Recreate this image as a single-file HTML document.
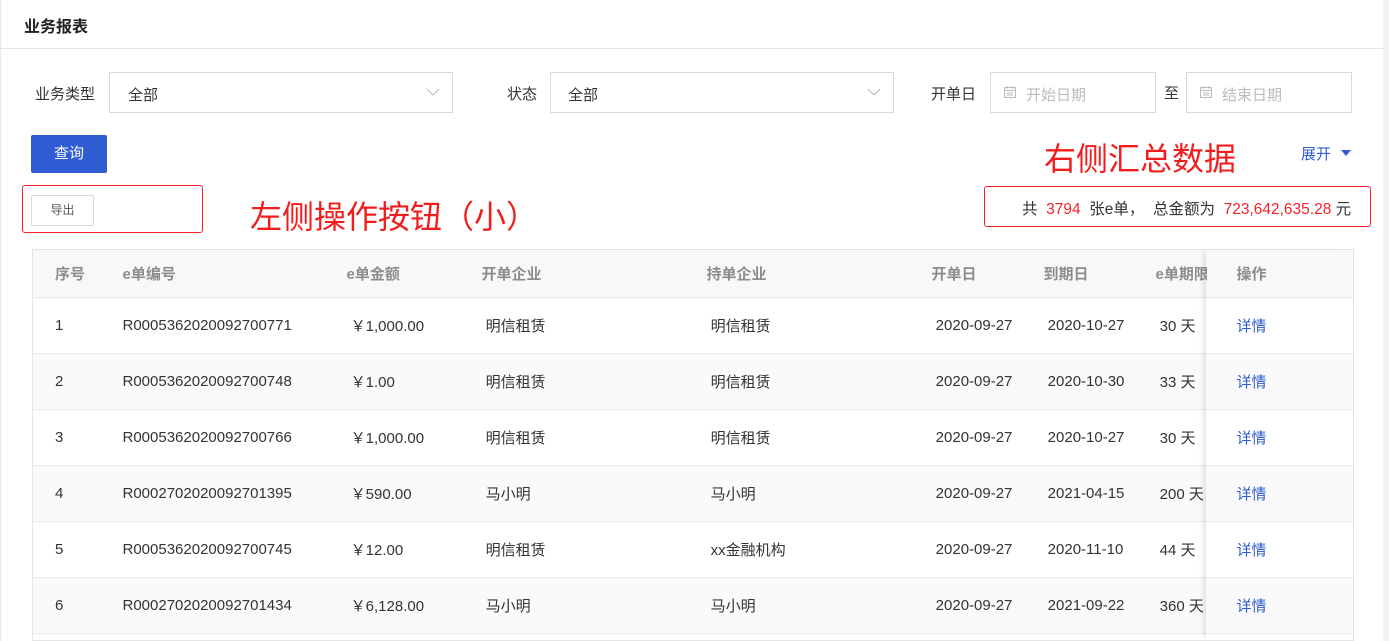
<!DOCTYPE html>
<html><head><meta charset="utf-8"><style>
*{margin:0;padding:0;box-sizing:border-box}
html,body{width:1389px;height:641px;overflow:hidden}
body{background:#f0f2f5;font-family:"Liberation Sans","Noto Sans CJK SC",sans-serif;font-size:15px;color:#333;position:relative}
.card{position:absolute;left:0;top:0;width:1383px;height:641px;background:#fff;border-left:1px solid #e8e8e8;overflow:hidden}
.a{position:absolute;white-space:nowrap}
.title{left:23px;top:13px;font-size:16px;font-weight:bold;color:#222}
.hr{left:0;top:48px;width:1383px;height:1px;background:#e4e4e4}
.box{position:absolute;border:1px solid #d9d9d9;background:#fff;height:41px}
.red{position:absolute;border:1px solid #f5222d;border-radius:3px}
table{position:absolute;left:31px;top:249px;width:1322px;border-collapse:collapse;border:1px solid #e4e4e4;table-layout:fixed}
td,th{height:56px;text-align:left;font-weight:normal;padding:0;border-bottom:1px solid #e8e8e8;white-space:nowrap;overflow:hidden}
th{height:48px;background:#f8f8f8;color:#8c8c8c;font-weight:bold;font-size:15px}
tr:nth-child(odd) td{background:#fafafa}
tr.last td{height:7px;border-bottom:0}
.fix{position:absolute;left:1205px;top:250px;width:147px;height:391px;box-shadow:-5px 0 6px -3px rgba(0,0,0,.12)}
</style></head><body>
<div class="card">
<div class="a title">业务报表</div>
<div class="a hr"></div>
<div class="a" style="left:34px;top:83px;color:#333">业务类型</div>
<div class="box" style="left:108px;top:72px;width:344px"><span class="a" style="left:18px;top:11px">全部</span><svg class="a" style="left:316px;top:14px" width="14" height="10"><path d="M1 2l6 6 6-6" fill="none" stroke="#bbb"/></svg></div>
<div class="a" style="left:506px;top:83px">状态</div>
<div class="box" style="left:549px;top:72px;width:344px"><span class="a" style="left:17px;top:11px">全部</span><svg class="a" style="left:316px;top:14px" width="14" height="10"><path d="M1 2l6 6 6-6" fill="none" stroke="#bbb"/></svg></div>
<div class="a" style="left:930px;top:83px">开单日</div>
<div class="box" style="left:989px;top:72px;width:166px;color:#bbb"><svg class="a" style="left:12px;top:12px" width="14" height="14"><rect x="1.5" y="2.5" width="11" height="10" fill="none" stroke="#bbb"/><path d="M1.5 5.5h11M4 1v3M10 1v3M4 8h6M4 10h6" stroke="#bbb"/></svg><span class="a" style="left:35px;top:11px">开始日期</span></div>
<div class="a" style="left:1163px;top:82px">至</div>
<div class="box" style="left:1185px;top:72px;width:166px;color:#bbb"><svg class="a" style="left:12px;top:12px" width="14" height="14"><rect x="1.5" y="2.5" width="11" height="10" fill="none" stroke="#bbb"/><path d="M1.5 5.5h11M4 1v3M10 1v3M4 8h6M4 10h6" stroke="#bbb"/></svg><span class="a" style="left:35px;top:11px">结束日期</span></div>
<div class="a" style="left:30px;top:135px;width:76px;height:38px;background:#2f5bd3;border-radius:2px;color:#fff;font-size:15px;text-align:center;line-height:38px">查询</div>
<div class="a" style="left:1043px;top:134px;font-size:32px;color:#f21d1d">右侧汇总数据</div>
<div class="a" style="left:1300px;top:143px;color:#2f5bd3">展开</div>
<svg class="a" style="left:1339px;top:149px" width="12" height="8"><path d="M1 1h10l-5 6z" fill="#2f5bd3"/></svg>
<div class="red" style="left:21px;top:185px;width:181px;height:48px"></div>
<div class="a" style="left:30px;top:195px;width:63px;height:31px;border:1px solid #d9d9d9;border-radius:2px;font-size:12px;text-align:center;line-height:29px;color:#555">导出</div>
<div class="a" style="left:249px;top:192px;font-size:32px;color:#f21d1d">左侧操作按钮（小）</div>
<div class="red" style="left:983px;top:186px;width:387px;height:41px"></div>
<div class="a" style="left:1021px;top:197px;color:#333;font-size:15.5px">共&nbsp;&nbsp;<span style="color:#f5222d">3794</span>&nbsp;&nbsp;张e单，&nbsp;&nbsp;总金额为&nbsp;&nbsp;<span style="color:#f5222d">723,642,635.28</span>&nbsp;元</div>
<table>
<colgroup><col style="width:90px"><col style="width:224px"><col style="width:135px"><col style="width:225px"><col style="width:225px"><col style="width:112px"><col style="width:112px"><col style="width:51px"><col></colgroup>
<tr><th style="padding-left:22px">序号</th><th>e单编号</th><th>e单金额</th><th>开单企业</th><th>持单企业</th><th>开单日</th><th>到期日</th><th>e单期限</th><th style="padding-left:30px">操作</th></tr>
<tr><td style="padding-left:22px">1</td><td>R0005362020092700771</td><td>&nbsp;￥1,000.00</td><td>&nbsp;明信租赁</td><td>&nbsp;明信租赁</td><td>&nbsp;2020-09-27</td><td>&nbsp;2020-10-27</td><td>&nbsp;30 天</td><td style="padding-left:30px;color:#2f5bd3">详情</td></tr>
<tr><td style="padding-left:22px">2</td><td>R0005362020092700748</td><td>&nbsp;￥1.00</td><td>&nbsp;明信租赁</td><td>&nbsp;明信租赁</td><td>&nbsp;2020-09-27</td><td>&nbsp;2020-10-30</td><td>&nbsp;33 天</td><td style="padding-left:30px;color:#2f5bd3">详情</td></tr>
<tr><td style="padding-left:22px">3</td><td>R0005362020092700766</td><td>&nbsp;￥1,000.00</td><td>&nbsp;明信租赁</td><td>&nbsp;明信租赁</td><td>&nbsp;2020-09-27</td><td>&nbsp;2020-10-27</td><td>&nbsp;30 天</td><td style="padding-left:30px;color:#2f5bd3">详情</td></tr>
<tr><td style="padding-left:22px">4</td><td>R0002702020092701395</td><td>&nbsp;￥590.00</td><td>&nbsp;马小明</td><td>&nbsp;马小明</td><td>&nbsp;2020-09-27</td><td>&nbsp;2021-04-15</td><td>&nbsp;200 天</td><td style="padding-left:30px;color:#2f5bd3">详情</td></tr>
<tr><td style="padding-left:22px">5</td><td>R0005362020092700745</td><td>&nbsp;￥12.00</td><td>&nbsp;明信租赁</td><td>&nbsp;xx金融机构</td><td>&nbsp;2020-09-27</td><td>&nbsp;2020-11-10</td><td>&nbsp;44 天</td><td style="padding-left:30px;color:#2f5bd3">详情</td></tr>
<tr><td style="padding-left:22px">6</td><td>R0002702020092701434</td><td>&nbsp;￥6,128.00</td><td>&nbsp;马小明</td><td>&nbsp;马小明</td><td>&nbsp;2020-09-27</td><td>&nbsp;2021-09-22</td><td>&nbsp;360 天</td><td style="padding-left:30px;color:#2f5bd3">详情</td></tr>
<tr class="last"><td></td><td></td><td></td><td></td><td></td><td></td><td></td><td></td><td></td></tr>
</table>
<div class="fix"></div>
</div>
</body></html>
